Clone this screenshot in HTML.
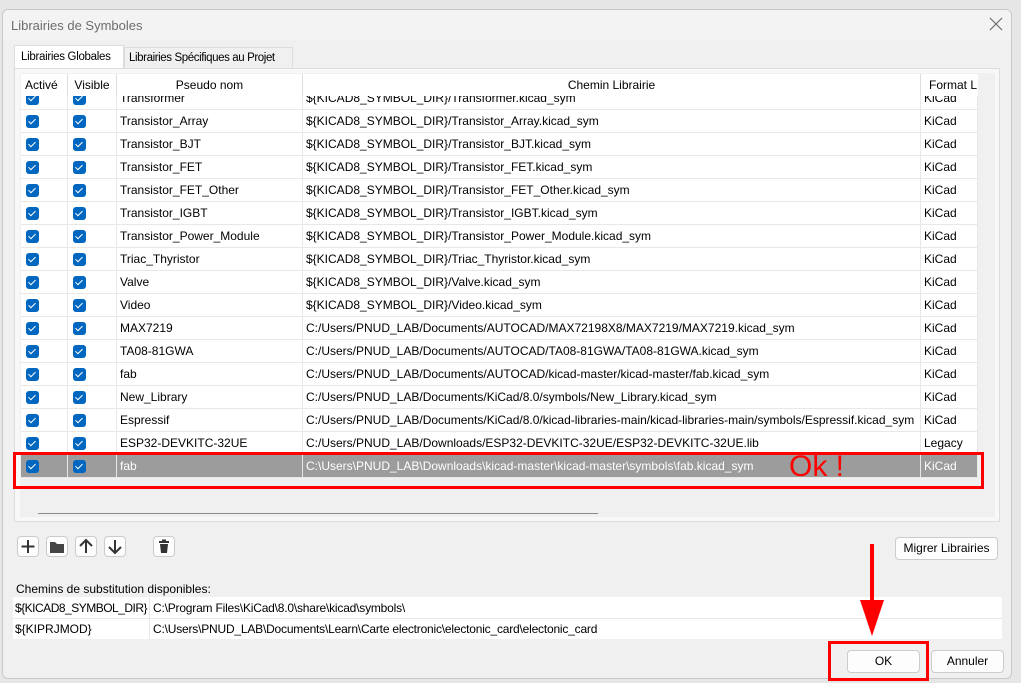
<!DOCTYPE html>
<html><head><meta charset="utf-8"><style>
*{margin:0;padding:0;box-sizing:border-box}
body{width:1021px;height:683px;background:#e6e6e6;font-family:"Liberation Sans",sans-serif;font-size:12px;color:#000;position:relative;overflow:hidden}
.a{position:absolute}
.win{left:2px;top:9px;width:1010px;height:670px;background:#f0f0f0;border:1px solid #c8c8c8;border-radius:6px;overflow:hidden}
.title{left:0;top:0;width:100%;height:30px;background:#f3f3f3}
.cb{position:absolute;width:13px;height:13px;background:#0067c0;border-radius:3px}
.cb:after{content:"";position:absolute;left:4px;top:2px;width:3px;height:6px;border:solid #fff;border-width:0 1.5px 1.5px 0;transform:rotate(45deg)}
.row{position:absolute;left:0;width:957px;height:23px;background:#fff;border-bottom:1px solid #e8e8e8}
.row div{position:absolute;top:0;height:22px;line-height:22px;border-right:1px solid #e8e8e8;white-space:nowrap;overflow:hidden;padding-left:3px}
.sel{background:#9c9c9c;color:#fff}
.hd div{position:absolute;top:0;height:22px;line-height:22px;border-right:1px solid #ddd;text-align:center;background:#fff}
.btn{position:absolute;width:22px;height:21px;border:1px solid #ccc;border-radius:4px;background:#fdfdfd}
.pb{position:absolute;border:1px solid #ccc;border-radius:4px;background:#fdfdfd;text-align:center;line-height:21px;height:23px}
</style></head><body>
<div class="a win">
 <div class="a title"></div>
 <div class="a" style="left:8px;top:8px;color:#6d6d6d;font-size:13px">Librairies de Symboles</div>
 <svg class="a" style="left:986px;top:7px" width="14" height="14"><path d="M1 1L13 13M13 1L1 13" stroke="#666" stroke-width="1.1"/></svg>
 <!-- tabs -->
 <div class="a" style="left:11px;top:35px;width:110px;height:24px;background:#fff;border:1px solid #ddd;border-bottom:none;padding:5px 0 0 6px;font-size:11.5px;letter-spacing:-0.3px;white-space:nowrap">Librairies Globales</div>
 <div class="a" style="left:121px;top:37px;width:169px;height:22px;background:#f0f0f0;border:1px solid #ddd;padding:4px 0 0 4px;font-size:11.5px;letter-spacing:-0.4px;white-space:nowrap;overflow:hidden">Librairies Spécifiques au Projet</div>
 <div class="a" style="left:11px;top:58px;width:986px;height:454px;background:#f8f8f8;border:1px solid #ddd"></div>
 <div class="a" style="left:17px;top:63px;width:975px;height:444px;background:#f0f0f0"></div>
 <!-- table -->
 <div class="a" style="left:18px;top:64px;width:957px;height:440px;overflow:hidden;background:#f0f0f0">
  <div id="rows" style="position:absolute;left:0;top:0;width:957px"></div>
  <div class="hd" style="position:absolute;left:0;top:0;width:957px;height:22px;background:#fff;border-bottom:1px solid #ddd">
   <div style="left:0;width:47px;text-align:left;padding-left:4px">Activé</div><div style="left:47px;width:49px">Visible</div><div style="left:96px;width:186px">Pseudo nom</div><div style="left:282px;width:618px">Chemin Librairie</div><div style="left:900px;width:57px;text-align:left;padding-left:8px;border:none">Format L</div>
  </div>
  <div class="a" style="left:17px;width:560px;height:3px;background:#8a8a8a;top:439px"></div>
 </div>
 <!-- toolbar -->
 <div class="btn" style="left:14px;top:526px"><svg width="20" height="19"><path d="M10 3v13M3.5 9.5h13" stroke="#333" stroke-width="2"/></svg></div>
 <div class="btn" style="left:43px;top:526px"><svg width="20" height="19"><path d="M3 5h5l2 2h7v9H3z" fill="#444"/></svg></div>
 <div class="btn" style="left:72px;top:526px"><svg width="20" height="19"><path d="M10 16V3M4 9l6-6 6 6" stroke="#333" stroke-width="2" fill="none"/></svg></div>
 <div class="btn" style="left:101px;top:526px"><svg width="20" height="19"><path d="M10 3v13M4 10l6 6 6-6" stroke="#333" stroke-width="2" fill="none"/></svg></div>
 <div class="btn" style="left:150px;top:526px"><svg width="20" height="19"><path d="M5 4h10v2H5zM8 2.5h4V4H8zM6 7h8l-1 9H7z" fill="#333"/></svg></div>
 <div class="pb" style="left:892px;top:527px;width:103px">Migrer Librairies</div>
 <div class="a" style="left:13px;top:572px">Chemins de substitution disponibles:</div>
 <div class="a" style="left:10px;top:587px;width:989px;height:42px;background:#fff"></div>
 <div class="a" style="left:10px;top:608px;width:989px;height:1px;background:#e8e8e8"></div>
 <div class="a" style="left:146px;top:587px;width:1px;height:42px;background:#e8e8e8"></div>
 <div class="a" style="left:12px;top:591px;letter-spacing:-0.5px">${KICAD8_SYMBOL_DIR}</div>
 <div class="a" style="left:150px;top:591px;letter-spacing:-0.2px">C:\Program Files\KiCad\8.0\share\kicad\symbols\</div>
 <div class="a" style="left:12px;top:612px">${KIPRJMOD}</div>
 <div class="a" style="left:150px;top:612px;letter-spacing:-0.2px">C:\Users\PNUD_LAB\Documents\Learn\Carte electronic\electonic_card\electonic_card</div>
 <div class="pb" style="left:844px;top:640px;width:73px">OK</div>
 <div class="pb" style="left:928px;top:640px;width:73px">Annuler</div>
</div>
<!-- annotations -->
<div class="a" style="left:13px;top:452px;width:971px;height:37px;border:3px solid #f00"></div>
<div class="a" style="left:789px;top:450px;font-size:30px;color:#f00">Ok !</div>
<div class="a" style="left:828px;top:641px;width:101px;height:40px;border:3px solid #f00"></div>
<svg class="a" style="left:857px;top:540px" width="30" height="100"><path d="M13 4h4v60h-4z" fill="#f00"/><path d="M3 60h24l-12 36z" fill="#f00"/></svg>
<script>
var d=[["Transformer","${KICAD8_SYMBOL_DIR}/Transformer.kicad_sym","KiCad"],
["Transistor_Array","${KICAD8_SYMBOL_DIR}/Transistor_Array.kicad_sym","KiCad"],
["Transistor_BJT","${KICAD8_SYMBOL_DIR}/Transistor_BJT.kicad_sym","KiCad"],
["Transistor_FET","${KICAD8_SYMBOL_DIR}/Transistor_FET.kicad_sym","KiCad"],
["Transistor_FET_Other","${KICAD8_SYMBOL_DIR}/Transistor_FET_Other.kicad_sym","KiCad"],
["Transistor_IGBT","${KICAD8_SYMBOL_DIR}/Transistor_IGBT.kicad_sym","KiCad"],
["Transistor_Power_Module","${KICAD8_SYMBOL_DIR}/Transistor_Power_Module.kicad_sym","KiCad"],
["Triac_Thyristor","${KICAD8_SYMBOL_DIR}/Triac_Thyristor.kicad_sym","KiCad"],
["Valve","${KICAD8_SYMBOL_DIR}/Valve.kicad_sym","KiCad"],
["Video","${KICAD8_SYMBOL_DIR}/Video.kicad_sym","KiCad"],
["MAX7219","C:/Users/PNUD_LAB/Documents/AUTOCAD/MAX72198X8/MAX7219/MAX7219.kicad_sym","KiCad"],
["TA08-81GWA","C:/Users/PNUD_LAB/Documents/AUTOCAD/TA08-81GWA/TA08-81GWA.kicad_sym","KiCad"],
["fab","C:/Users/PNUD_LAB/Documents/AUTOCAD/kicad-master/kicad-master/fab.kicad_sym","KiCad"],
["New_Library","C:/Users/PNUD_LAB/Documents/KiCad/8.0/symbols/New_Library.kicad_sym","KiCad"],
["Espressif","C:/Users/PNUD_LAB/Documents/KiCad/8.0/kicad-libraries-main/kicad-libraries-main/symbols/Espressif.kicad_sym","KiCad"],
["ESP32-DEVKITC-32UE","C:/Users/PNUD_LAB/Downloads/ESP32-DEVKITC-32UE/ESP32-DEVKITC-32UE.lib","Legacy"],
["fab","C:\\Users\\PNUD_LAB\\Downloads\\kicad-master\\kicad-master\\symbols\\fab.kicad_sym","KiCad"]];
var h="";d.forEach(function(r,i){var t=13+i*23;h+='<div class="row'+(i==16?' sel':'')+'" style="top:'+t+'px"><div style="left:0;width:47px"></div><div style="left:47px;width:49px"></div><div style="left:96px;width:186px">'+r[0]+'</div><div style="left:282px;width:618px">'+r[1]+'</div><div style="left:900px;width:57px">'+r[2]+'</div><span class="cb" style="left:5px;top:5px"></span><span class="cb" style="left:52px;top:5px"></span></div>';});
document.getElementById("rows").innerHTML=h;
</script>
</body></html>
